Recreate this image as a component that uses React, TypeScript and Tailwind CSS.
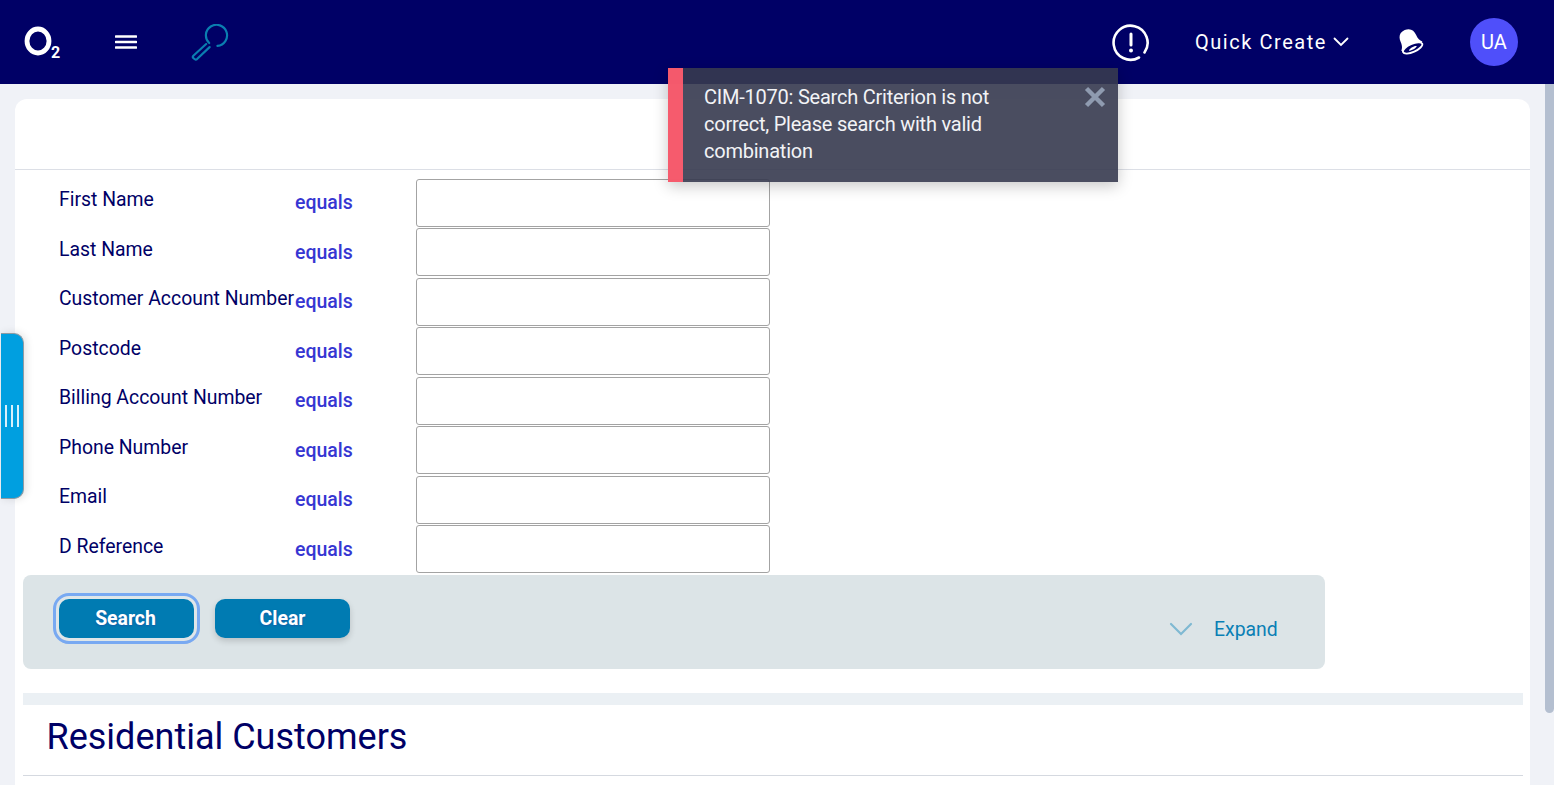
const fields = [
  "First Name",
  "Last Name",
  "Customer Account Number",
  "Postcode",
  "Billing Account Number",
  "Phone Number",
  "Email",
  "D Reference",
];

function Header() {
  return (
    <header className="flex h-[84px] shrink-0 items-center bg-[#000066] text-white">
      {/* O2 logo */}
      <div className="ml-[24px] flex w-[36px] items-end">
        <svg width="28" height="30" viewBox="0 0 28 30" className="mb-[3px] shrink-0">
          <ellipse cx="14" cy="15" rx="11" ry="12" fill="none" stroke="white" strokeWidth="4.8" />
        </svg>
        <span className="-ml-[1px] -mb-[1px] text-[16px] leading-[14px] font-bold">2</span>
      </div>
      <svg width="22" height="16" viewBox="0 0 22 16" className="ml-[55px]">
        <path d="M1 2.5h20M1 8h20M1 13.5h20" stroke="white" strokeWidth="2.6" strokeLinecap="round" />
      </svg>
      {/* search key */}
      <svg width="40" height="40" viewBox="0 0 40 40" className="ml-[53px] mt-[3px]">
        <path
          d="M19.6 20.5 A10.8 10.8 0 1 1 28 23.4 M16.5 21.5 L3.4 33.4 Q2.3 34.6 3.4 35.8 L5 37 Q6 37.8 7.2 36.8 L20 24.6"
          transform="translate(0 -1) scale(0.98)"
          fill="none"
          stroke="#0a7eb0"
          strokeWidth="2.2"
          strokeLinecap="round"
          strokeLinejoin="round"
        />
      </svg>
      <div className="ml-auto flex items-center">
        <svg width="38" height="38" viewBox="0 0 38 38" className="mt-[1px]">
          <path
            d="M27 33.5 A17 17 0 1 1 32.5 28.5"
            fill="none"
            stroke="white"
            strokeWidth="2.6"
            strokeLinecap="round"
          />
          <path d="M19 10v11" stroke="white" strokeWidth="3" strokeLinecap="round" />
          <circle cx="19" cy="26.5" r="2" fill="white" />
        </svg>
        <span className="ml-[45px] text-[20px] leading-none tracking-[1.55px]">Quick Create</span>
        <svg width="16" height="10" viewBox="0 0 16 10" className="ml-[6px] -mt-[1px]">
          <path d="M1.5 1.5 8 8l6.5-6.5" fill="none" stroke="white" strokeWidth="1.8" strokeLinecap="round" />
        </svg>
        <svg width="28" height="28" viewBox="0 0 28 28" className="ml-[47px]">
          <g transform="rotate(-24 14 14)">
            <path
              d="M14 1c-6 0-8.500 4-8.500 9 0 4-1 6.500-3 8.500 3 3 20 3 23 0-2-2-3-4.500-3-8.500 0-5-2.500-9-8.500-9Z"
              fill="white"
            />
            <ellipse cx="14" cy="20.500" rx="10.500" ry="4" fill="#000066" stroke="white" strokeWidth="1.8" />
            <path d="M9.500 21.500c1.500-2 7-2.500 9-1-1 1.500-6.500 2.500-9 1Z" fill="white" />
          </g>
        </svg>
        <div className="ml-[46px] mr-[36px] flex size-[48px] items-center justify-center rounded-full bg-[#4f4ffa] text-[20px]">
          UA
        </div>
      </div>
    </header>
  );
}

function SearchRow({ label }: { label: string }) {
  return (
    <div className="flex h-[49.5px] pl-[44px]">
      <span className="w-[236px] shrink-0 pt-[9.25px] text-[19.4px] leading-[24px] whitespace-nowrap text-[#000066]">
        {label}
      </span>
      <span className="w-[121px] shrink-0 pt-[12.25px] text-[19.5px] leading-[24px] font-medium text-[#3636d2]">
        equals
      </span>
      <input className="h-[48px] w-[354px] rounded-[3px] border border-[#a3a3a3] bg-white" />
    </div>
  );
}

function ActionBar() {
  return (
    <div className="ml-[8px] flex h-[94px] w-[1302px] items-start rounded-lg bg-[#dce4e7] pl-[36px] pt-[24px]">
      <button className="h-[39px] w-[135px] rounded-[10px] bg-[#007bb2] pr-[2px] text-[19.4px] font-bold text-white shadow-[0_0_0_3px_#dfe6e9,0_3px_0_3px_#c4c9cc] outline-[3px] outline-offset-[3px] outline-[#78a9f2] [text-shadow:0_1px_2px_rgba(40,60,160,0.5)]">
        Search
      </button>
      <button className="ml-[21px] h-[39px] w-[135px] rounded-[10px] bg-[#007bb2] text-[19.4px] font-bold text-white shadow-[0_3px_6px_rgba(0,0,0,0.16)] [text-shadow:0_1px_2px_rgba(40,60,160,0.5)]">
        Clear
      </button>
      <svg width="24" height="14" viewBox="0 0 24 14" className="ml-[819px] mt-[23px]">
        <path d="M2 2l10 10L22 2" fill="none" stroke="#7fb9d2" strokeWidth="2.2" strokeLinecap="round" />
      </svg>
      <span className="ml-[21px] mt-[19px] text-[19.4px] leading-[24px] text-[#0a7fb5]">Expand</span>
    </div>
  );
}

export default function App() {
  return (
    <div className="relative flex h-[785px] flex-col overflow-hidden bg-[#f0f2f7] font-['Roboto',sans-serif]">
      <Header />

      <div className="flex min-h-0 flex-1">
        <main className="ml-[15px] mt-[15px] w-[1515px] shrink-0 overflow-hidden rounded-t-xl bg-white">
          <div className="h-[71px] border-b border-[#dcdfe6]" />
          <div className="pt-[8.75px]">
            {fields.map((field) => (
              <SearchRow key={field} label={field} />
            ))}
          </div>
          <ActionBar />
          <div className="ml-[8px] mr-[7px] mt-[24px] h-[12px] bg-[#ebf0f4]" />
          <h2 className="ml-[31.5px] mt-[10.5px] text-[36px] leading-[44px] text-[#000066]">Residential Customers</h2>
          <div className="ml-[8px] mr-[7px] mt-[16px] h-[1px] bg-[#d5d9e0]" />
        </main>

        {/* scrollbar */}
        <div className="ml-[15px] h-[629px] w-[9px] rounded-b-md bg-[#b4bfd0]" />
      </div>

      {/* error toast */}
      <div className="absolute left-[668px] top-[68px] flex h-[114px] w-[450px] bg-[#363a4f]/90 shadow-[0_4px_14px_rgba(0,0,0,0.22)]">
        <div className="w-[15px] shrink-0 bg-[#ff5c6e]/95" />
        <p className="ml-[21px] mt-[16px] w-[300px] text-[20px] leading-[27px] tracking-[-0.23px] text-[#f2f3f6]">
          CIM-1070: Search Criterion is not correct, Please search with valid combination
        </p>
        <svg width="22" height="22" viewBox="0 0 22 22" className="absolute right-[12px] top-[18px]">
          <path d="M2.500 2.500l17 17M19.500 2.500l-17 17" stroke="#8f9bb0" strokeWidth="4.5" />
        </svg>
      </div>

      {/* side drawer handle */}
      <div className="absolute left-[1px] top-[333px] flex h-[166px] w-[23px] items-center justify-center gap-[4px] rounded-r-[10px] border border-l-0 border-[#8f9ba3] bg-[#009fe0] pr-[1px] shadow-[2px_0_8px_rgba(0,0,0,0.12)]">
        <span className="h-[22px] w-[2px] bg-[#d8f0fb]" />
        <span className="h-[22px] w-[2px] bg-[#d8f0fb]" />
        <span className="h-[22px] w-[2px] bg-[#d8f0fb]" />
      </div>
    </div>
  );
}
